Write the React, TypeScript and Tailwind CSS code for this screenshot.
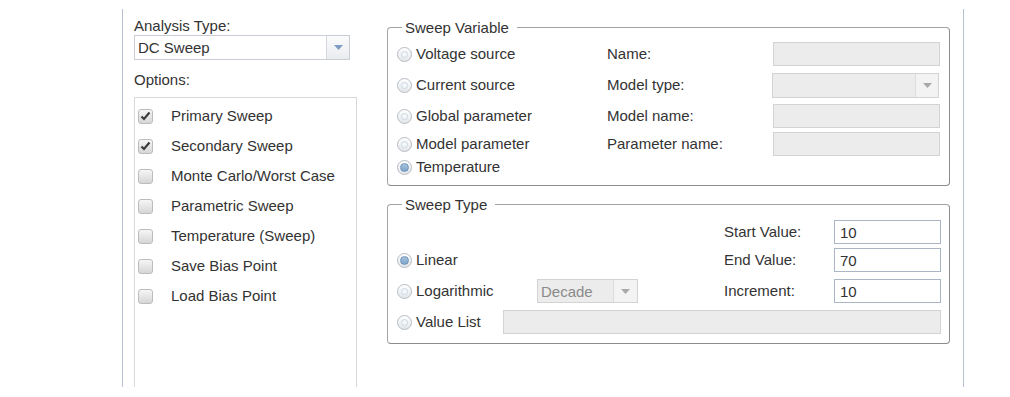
import type { ReactNode } from "react";

const options = [
  { label: "Primary Sweep", checked: true },
  { label: "Secondary Sweep", checked: true },
  { label: "Monte Carlo/Worst Case", checked: false },
  { label: "Parametric Sweep", checked: false },
  { label: "Temperature (Sweep)", checked: false },
  { label: "Save Bias Point", checked: false },
  { label: "Load Bias Point", checked: false },
];

function Checkbox({ checked }: { checked: boolean }) {
  return (
    <span className="flex h-[15px] w-[15px] shrink-0 items-center justify-center rounded-[3px] border border-[#bcbcbc] bg-gradient-to-b from-[#f6f6f6] to-[#d6d6d6]">
      {checked && (
        <svg width="11" height="10" viewBox="0 0 11 10">
          <path d="M1.5 5.5 L4 8 L9.5 1.5" fill="none" stroke="#3a3a3a" strokeWidth="2.2" />
        </svg>
      )}
    </span>
  );
}

function Radio({ checked = false }: { checked?: boolean }) {
  return (
    <span className="flex h-[15px] w-[15px] shrink-0 items-center justify-center rounded-full border border-[#b6bbc1] bg-gradient-to-b from-white to-[#e3e6ea]">
      {checked ? (
        <span className="h-[9px] w-[9px] rounded-full border border-[#6f93bb] bg-gradient-to-b from-[#a9c4df] to-[#7ea3c9]" />
      ) : (
        <span className="h-[7px] w-[7px] rounded-full border border-[#cbd7e1] bg-[#f4f7f9]" />
      )}
    </span>
  );
}

function RadioLabel({ label, checked, className }: { label: string; checked?: boolean; className?: string }) {
  return (
    <span className={`flex items-center gap-[4px] ${className ?? ""}`}>
      <Radio checked={checked} />
      <span>{label}</span>
    </span>
  );
}

function Arrow() {
  return (
    <svg width="9" height="5" viewBox="0 0 9 5">
      <path d="M0 0 H9 L4.5 5 Z" fill="#7f9cc2" />
    </svg>
  );
}

function GrayArrow() {
  return (
    <svg width="9" height="5" viewBox="0 0 9 5">
      <path d="M0 0 H9 L4.5 5 Z" fill="#a9a9a9" />
    </svg>
  );
}

function DisabledInput({ className }: { className?: string }) {
  return <div className={`h-[24px] border border-[#d3d3d3] bg-[#ececec] ${className ?? ""}`} />;
}

function ValueInput({ value }: { value: string }) {
  return (
    <div className="flex h-[24px] w-[107px] items-center border border-[#aab5c6] bg-white pl-[5px] leading-none">
      {value}
    </div>
  );
}

function Fieldset({ title, children, className }: { title: string; children: ReactNode; className?: string }) {
  return (
    <fieldset className={`rounded-[4px] border border-[#a3a3a3] border-r-[#8c8c8c] border-b-[#8c8c8c] ${className ?? ""}`}>
      <legend className="ml-[5px] pl-[3px] pr-[8px] leading-[17px]">{title}</legend>
      {children}
    </fieldset>
  );
}

export default function App() {
  return (
    <div className="h-[397px] w-[1010px] overflow-hidden bg-white pt-[9px] font-['Liberation_Sans',Arial,sans-serif] text-[15px] text-[#333]">
      <div className="ml-[122px] flex h-[378px] w-[842px] border-x border-[#b7bfd0] pl-[11px] pt-[8px]">
        {/* left column */}
        <div className="flex w-[223px] flex-col">
          <div className="h-[18px] leading-[18px]">Analysis Type:</div>
          <div className="flex h-[25px] w-[216px] border border-[#c9cdd4] bg-white">
            <div className="flex flex-1 items-center pl-[3px] leading-none">DC Sweep</div>
            <div className="flex w-[23px] items-center justify-center border-l border-[#d4d8dd] bg-gradient-to-b from-[#fbfbfb] to-[#e9ecef]">
              <Arrow />
            </div>
          </div>
          <div className="mt-[11px] h-[18px] leading-[18px]">Options:</div>
          <div className="mt-[8px] flex flex-1 flex-col border border-b-0 border-[#d8d8d8] pt-[3px]">
            {options.map((option) => (
              <div key={option.label} className="flex h-[30px] items-center pl-[3px]">
                <Checkbox checked={option.checked} />
                <span className="ml-[18px]">{option.label}</span>
              </div>
            ))}
          </div>
        </div>

        {/* right column */}
        <div className="ml-[30px] flex w-[563px] flex-col">
          <Fieldset title="Sweep Variable" className="mt-[2px] pl-[9px] pr-[8px] pt-[6px] pb-[7px]">
            <div className="flex h-[24px] items-center">
              <RadioLabel label="Voltage source" className="w-[210px]" />
              <span className="w-[166px]">Name:</span>
              <DisabledInput className="w-[167px]" />
            </div>
            <div className="mt-[7px] flex h-[25px] items-center">
              <RadioLabel label="Current source" className="w-[210px]" />
              <span className="w-[165px]">Model type:</span>
              <div className="flex h-[25px] w-[167px] border border-[#d3d3d3] bg-[#ececec]">
                <div className="flex-1" />
                <div className="flex w-[23px] items-center justify-center border-l border-[#dcdcdc] bg-[#f3f3f3]">
                  <GrayArrow />
                </div>
              </div>
            </div>
            <div className="mt-[6px] flex h-[24px] items-center">
              <RadioLabel label="Global parameter" className="w-[210px]" />
              <span className="w-[166px]">Model name:</span>
              <DisabledInput className="w-[167px]" />
            </div>
            <div className="mt-[4px] flex h-[24px] items-center">
              <RadioLabel label="Model parameter" className="w-[210px]" />
              <span className="w-[166px]">Parameter name:</span>
              <DisabledInput className="w-[167px]" />
            </div>
            <div className="flex h-[22px] items-center">
              <RadioLabel label="Temperature" checked />
            </div>
          </Fieldset>

          <Fieldset title="Sweep Type" className="mt-[10px] pl-[9px] pr-[8px] pt-[7px] pb-[9px]">
            <div className="flex h-[24px] items-center">
              <span className="ml-auto w-[110px]">Start Value:</span>
              <ValueInput value="10" />
            </div>
            <div className="mt-[4px] flex h-[24px] items-center">
              <RadioLabel label="Linear" checked />
              <span className="ml-auto w-[110px]">End Value:</span>
              <ValueInput value="70" />
            </div>
            <div className="mt-[7px] flex h-[24px] items-center">
              <RadioLabel label="Logarithmic" className="w-[140px]" />
              <div className="flex h-[24px] w-[101px] border border-[#d3d3d3] bg-[#ececec] text-[#8a8a8a]">
                <div className="flex flex-1 items-center pl-[3px] leading-none">Decade</div>
                <div className="flex w-[24px] items-center justify-center border-l border-[#dcdcdc] bg-[#f3f3f3]">
                  <GrayArrow />
                </div>
              </div>
              <span className="ml-auto w-[110px]">Increment:</span>
              <ValueInput value="10" />
            </div>
            <div className="mt-[7px] flex h-[24px] items-center">
              <RadioLabel label="Value List" className="w-[106px]" />
              <DisabledInput className="flex-1" />
            </div>
          </Fieldset>
        </div>
      </div>
    </div>
  );
}
